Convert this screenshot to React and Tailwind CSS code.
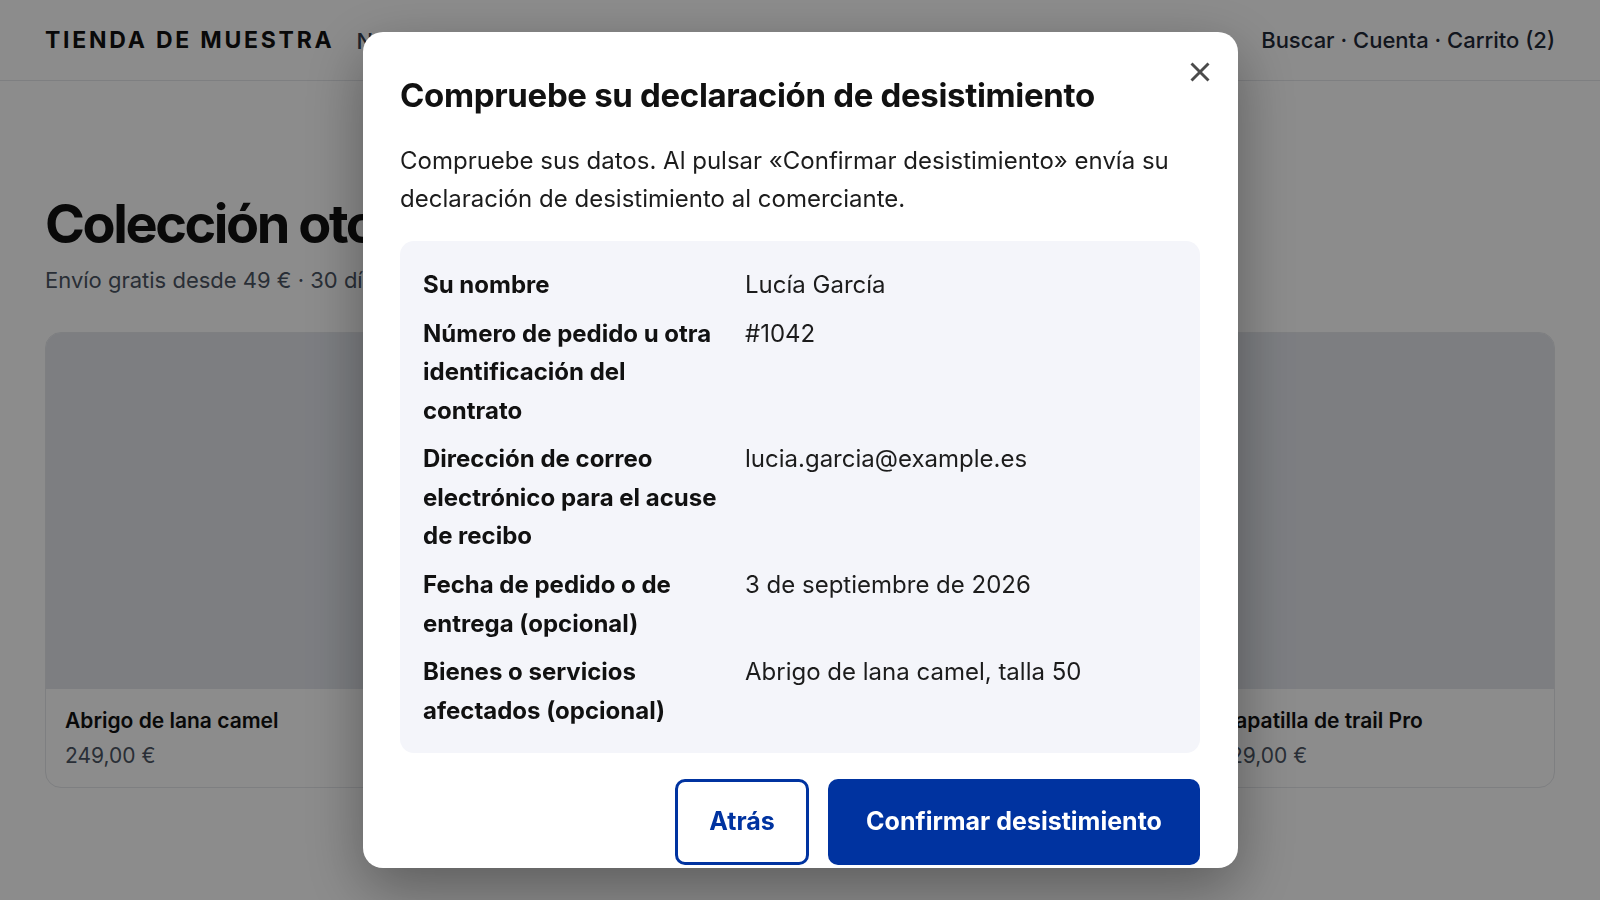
import React from 'react';

const products = [
  { name: 'Abrigo de lana camel', price: '249,00 €' },
  { name: 'Jersey de punto trenzado', price: '89,00 €' },
  { name: 'Bolso de piel cognac', price: '159,00 €' },
  { name: 'Zapatilla de trail Pro', price: '129,00 €' },
];

const details = [
  { label: 'Su nombre', value: 'Lucía García' },
  { label: 'Número de pedido u otra identificación del contrato', value: '#1042' },
  { label: 'Dirección de correo electrónico para el acuse de recibo', value: 'lucia.garcia@example.es' },
  { label: 'Fecha de pedido o de entrega (opcional)', value: '3 de septiembre de 2026' },
  { label: 'Bienes o servicios afectados (opcional)', value: 'Abrigo de lana camel, talla 50' },
];

const App = () => {
  return (
    <div className="min-h-screen bg-white font-['Inter','Noto_Sans',sans-serif] text-[#111]">
      {/* tienda de fondo */}
      <header className="h-[81px] border-b border-[#e5e7eb] px-[45px] flex items-center justify-between">
        <div className="flex items-center gap-[22px]">
          <span className="text-[23px] font-bold tracking-[0.12em]">TIENDA DE MUESTRA</span>
          <nav className="mt-[3px] flex gap-6 text-[22px] font-medium text-[#374151]">
            <span>Novedades</span>
            <span>Mujer</span>
            <span>Hombre</span>
          </nav>
        </div>
        <div className="text-[22px] font-medium text-[#1f2937]">Buscar · Cuenta · Carrito (2)</div>
      </header>

      <main className="px-[45px] pt-[111px]">
        <h1 className="text-[54px] leading-[64px] font-bold tracking-[-0.045em]">Colección otoño</h1>
        <p className="mt-[8px] text-[22px] leading-[32px] text-[#4b5563]">
          Envío gratis desde 49 € · 30 días de desistimiento
        </p>
        <div className="mt-[36px] grid grid-cols-4 gap-8">
          {products.map((p) => (
            <div key={p.name} className="rounded-2xl border border-[#e5e7eb] overflow-hidden">
              <div className="h-[356px] bg-[#e3e6ec]" />
              <div className="px-[19px] pt-[18px] pb-[17px]">
                <div className="text-[21px] leading-[28px] font-semibold">{p.name}</div>
                <div className="mt-[7px] text-[21px] leading-[28px] text-[#4b5563]">{p.price}</div>
              </div>
            </div>
          ))}
        </div>
      </main>

      {/* diálogo */}
      <div className="fixed inset-0 bg-black/45 flex items-center justify-center">
        <div className="relative w-[875px] max-h-[calc(100vh-64px)] overflow-hidden rounded-[20px] bg-white px-[37.5px] pt-[43px] pb-10 shadow-[0_20px_60px_rgba(0,0,0,0.35)]">
          <button
            type="button"
            aria-label="Cerrar"
            className="absolute right-4 top-[18px] w-11 h-11 flex items-center justify-center text-[#4b4b4b]"
          >
            <svg width="20" height="20" viewBox="0 0 20 20" fill="none" stroke="currentColor" strokeWidth="2.9">
              <path d="M1.5 1.5 L18.5 18.5 M18.5 1.5 L1.5 18.5" />
            </svg>
          </button>

          <h2 className="text-[33px] leading-[40px] font-bold tracking-[-0.01em] text-[#111]">
            Compruebe su declaración de desistimiento
          </h2>
          <p className="mt-[27px] text-[24px] leading-[38.4px] text-[#1c1c1c]">
            Compruebe sus datos. Al pulsar «Confirmar desistimiento» envía su declaración de desistimiento al comerciante.
          </p>

          <dl className="mt-[22px] rounded-[14px] bg-[#f4f5fa] px-[23px] pt-[25px] pb-[23px] grid grid-cols-[298px_1fr] gap-x-6 gap-y-[10.5px] text-[24px] leading-[38.4px]">
            {details.map((d) => (
              <React.Fragment key={d.label}>
                <dt className="font-bold text-[#111]">{d.label}</dt>
                <dd className="text-[#1c1c1c]">{d.value}</dd>
              </React.Fragment>
            ))}
          </dl>

          <div className="mt-[26px] flex justify-end gap-[19px]">
            <button
              type="button"
              className="w-[134px] h-[85.5px] rounded-[10px] border-[3px] border-[#0033a0] text-[#0033a0] text-[25px] font-bold"
            >
              Atrás
            </button>
            <button
              type="button"
              className="w-[372px] h-[85.5px] rounded-[10px] bg-[#0033a0] text-white text-[25px] font-bold"
            >
              Confirmar desistimiento
            </button>
          </div>
        </div>
      </div>
    </div>
  );
};

export default App;
